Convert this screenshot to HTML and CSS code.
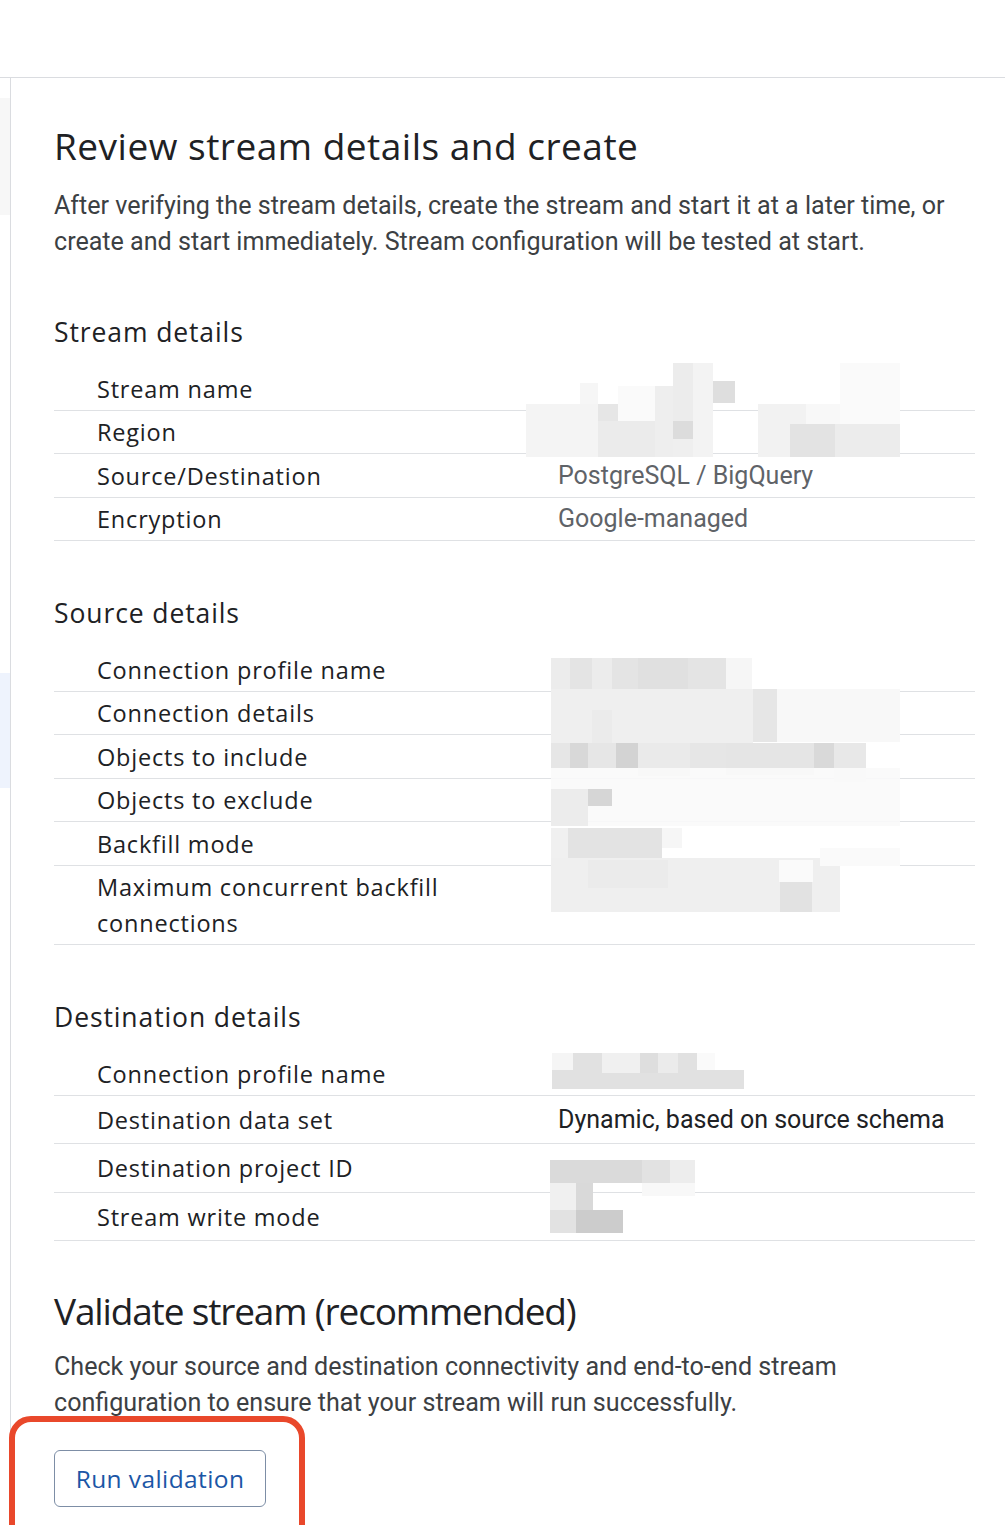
FILE: index.html
```html
<!DOCTYPE html>
<html lang="en">
<head>
<meta charset="utf-8">
<title>Review stream details and create</title>
<link rel="stylesheet" href="styles.css">
</head>
<body>
<div class="topbar"></div>
<div class="layout">
  <aside class="rail">
    <div class="rail-block rail-gray"></div>
    <div class="rail-block rail-blue"></div>
  </aside>
  <main class="main">
    <h1 class="title">Review stream details and create</h1>
    <p class="para">After verifying the stream details, create the stream and start it at a later time, or create and start immediately. Stream configuration will be tested at start.</p>

    <h2 class="section-title">Stream details</h2>
    <div class="table">
      <div class="row"><div class="label">Stream name</div><div class="value"></div></div>
      <div class="row"><div class="label">Region</div><div class="value"></div></div>
      <div class="row"><div class="label">Source/Destination</div><div class="value muted">PostgreSQL / BigQuery</div></div>
      <div class="row"><div class="label">Encryption</div><div class="value muted">Google-managed</div></div>
      <svg class="redact redact-stream" width="380" height="100" viewBox="526 360 380 100" aria-hidden="true">
        <rect x="526" y="403" width="72" height="53" fill="#f4f4f4"/>
        <rect x="580" y="382" width="18" height="21" fill="#f6f6f6"/>
        <rect x="598" y="403" width="20" height="53" fill="#ebebeb"/>
        <rect x="598" y="403" width="20" height="17" fill="#e6e6e6"/>
        <rect x="618" y="420" width="37" height="36" fill="#ebebeb"/>
        <rect x="618" y="385" width="37" height="35" fill="#fafafa"/>
        <rect x="655" y="385" width="18" height="71" fill="#eeeeee"/>
        <rect x="673" y="362" width="20" height="58" fill="#ececec"/>
        <rect x="673" y="420" width="20" height="18" fill="#dcdcdc"/>
        <rect x="673" y="438" width="20" height="18" fill="#efefef"/>
        <rect x="693" y="362" width="20" height="94" fill="#f3f3f3"/>
        <rect x="713" y="380" width="22" height="22" fill="#dedede"/>
        <rect x="758" y="403" width="48" height="53" fill="#f2f2f2"/>
        <rect x="790" y="423" width="45" height="33" fill="#e3e3e3"/>
        <rect x="835" y="423" width="65" height="33" fill="#ececec"/>
        <rect x="840" y="362" width="60" height="61" fill="#fafafa"/>
        <rect x="806" y="403" width="34" height="20" fill="#f8f8f8"/>
      </svg>
    </div>

    <h2 class="section-title">Source details</h2>
    <div class="table">
      <div class="row"><div class="label">Connection profile name</div><div class="value"></div></div>
      <div class="row"><div class="label">Connection details</div><div class="value"></div></div>
      <div class="row"><div class="label">Objects to include</div><div class="value"></div></div>
      <div class="row"><div class="label">Objects to exclude</div><div class="value"></div></div>
      <div class="row"><div class="label">Backfill mode</div><div class="value"></div></div>
      <div class="row"><div class="label">Maximum concurrent backfill connections</div><div class="value"></div></div>
      <svg class="redact redact-source" width="355" height="260" viewBox="550 656 355 260" aria-hidden="true">
        <rect x="551" y="658" width="175" height="31" fill="#e4e4e4"/>
        <rect x="551" y="658" width="19" height="31" fill="#ececec"/>
        <rect x="592" y="658" width="20" height="31" fill="#ececec"/>
        <rect x="638" y="658" width="50" height="31" fill="#e0e0e0"/>
        <rect x="726" y="658" width="26" height="31" fill="#f6f6f6"/>
        <rect x="551" y="689" width="202" height="54" fill="#efefef"/>
        <rect x="592" y="710" width="20" height="33" fill="#ebebeb"/>
        <rect x="753" y="689" width="24" height="53" fill="#e6e6e6"/>
        <rect x="777" y="689" width="123" height="53" fill="#f8f8f8"/>
        <rect x="551" y="743" width="315" height="25" fill="#e6e6e6"/>
        <rect x="570" y="743" width="18" height="25" fill="#d8d8d8"/>
        <rect x="616" y="743" width="22" height="25" fill="#d3d3d3"/>
        <rect x="638" y="743" width="52" height="33" fill="#eaeaea"/>
        <rect x="726" y="743" width="88" height="32" fill="#e5e5e5"/>
        <rect x="814" y="743" width="20" height="25" fill="#d9d9d9"/>
        <rect x="834" y="743" width="32" height="25" fill="#e8e8e8"/>
        <rect x="834" y="768" width="32" height="14" fill="#f2f2f2"/>
        <rect x="551" y="768" width="349" height="58" fill="#f9f9f9" opacity="0.9"/>
        <rect x="551" y="789" width="37" height="37" fill="#ececec"/>
        <rect x="588" y="789" width="24" height="17" fill="#d6d6d6"/>
        <rect x="568" y="828" width="94" height="30" fill="#e3e3e3"/>
        <rect x="551" y="828" width="17" height="30" fill="#f0f0f0"/>
        <rect x="662" y="828" width="20" height="20" fill="#f6f6f6"/>
        <rect x="551" y="858" width="289" height="54" fill="#efefef"/>
        <rect x="588" y="860" width="80" height="28" fill="#ebebeb"/>
        <rect x="780" y="882" width="32" height="30" fill="#e2e2e2"/>
        <rect x="779" y="860" width="34" height="22" fill="#fafafa"/>
        <rect x="820" y="848" width="80" height="18" fill="#fafafa"/>
      </svg>
    </div>

    <h2 class="section-title section-dest">Destination details</h2>
    <div class="table table-dest">
      <div class="row"><div class="label">Connection profile name</div><div class="value"></div></div>
      <div class="row"><div class="label">Destination data set</div><div class="value">Dynamic, based on source schema</div></div>
      <div class="row"><div class="label">Destination project ID</div><div class="value"></div></div>
      <div class="row"><div class="label">Stream write mode</div><div class="value"></div></div>
      <svg class="redact redact-dest" width="200" height="185" viewBox="548 1050 200 185" aria-hidden="true">
        <rect x="552" y="1053" width="192" height="36" fill="#e1e1e1"/>
        <rect x="552" y="1053" width="21" height="17" fill="#f5f5f5"/>
        <rect x="602" y="1053" width="38" height="20" fill="#f0f0f0"/>
        <rect x="640" y="1053" width="18" height="20" fill="#dedede"/>
        <rect x="658" y="1053" width="20" height="20" fill="#ebebeb"/>
        <rect x="697" y="1053" width="18" height="17" fill="#fafafa"/>
        <rect x="715" y="1053" width="29" height="17" fill="#ffffff"/>
        <rect x="550" y="1160" width="145" height="23" fill="#dadada"/>
        <rect x="642" y="1160" width="28" height="23" fill="#e2e2e2"/>
        <rect x="670" y="1160" width="25" height="23" fill="#ededed"/>
        <rect x="550" y="1183" width="26" height="27" fill="#f0f0f0"/>
        <rect x="576" y="1183" width="17" height="27" fill="#d9d9d9"/>
        <rect x="642" y="1183" width="53" height="13" fill="#f8f8f8"/>
        <rect x="550" y="1210" width="26" height="23" fill="#e2e2e2"/>
        <rect x="576" y="1210" width="47" height="23" fill="#cccccc"/>
      </svg>
    </div>

    <h1 class="title title-validate">Validate stream (recommended)</h1>
    <p class="para para-validate">Check your source and destination connectivity and end-to-end stream configuration to ensure that your stream will run successfully.</p>
    <div class="action">
      <button class="btn-outline" type="button">Run validation</button>
      <div class="highlight" aria-hidden="true"></div>
    </div>
  </main>
</div>
</body>
</html>
```

FILE: styles.css
```css
* { box-sizing: border-box; }
html, body { margin: 0; padding: 0; background: #ffffff; }
body {
  font-family: Roboto, "Liberation Sans", sans-serif;
  color: #202124;
  width: 1005px;
  height: 1525px;
  overflow: hidden;
}
.topbar {
  height: 78px;
  border-bottom: 1px solid #dadce0;
}
.layout {
  display: flex;
  align-items: stretch;
  min-height: 1447px;
}
.rail {
  width: 11px;
  flex: 0 0 11px;
  border-right: 1px solid #dadce0;
  padding-top: 20px;
}
.rail-block { width: 10px; height: 117px; }
.rail-gray { background: #f7f7f7; }
.rail-blue { background: #eef3fd; margin-top: 458px; height: 115px; }
.main {
  flex: 1;
  padding: 46px 30px 0 43px;
}
.title {
  margin: 0;
  font-family: "Open Sans", sans-serif;
  font-weight: 400;
  font-size: 37px;
  line-height: 44px;
  letter-spacing: 0.5px;
  color: #202124;
}
.para {
  margin: 20px 0 0;
  max-width: 905px;
  font-family: Roboto, sans-serif;
  font-size: 25.1px;
  line-height: 36px;
  color: #3c4043;
}
.section-title {
  margin: 54px 0 0;
  font-family: "Open Sans", sans-serif;
  font-weight: 500;
  font-size: 26.5px;
  line-height: 36px;
  letter-spacing: 0.9px;
  color: #202124;
}
.table + .section-title { margin-top: 54px; }
.table + .section-dest { margin-top: 54px; }
.table {
  position: relative;
  margin-top: 17px;
}
.row {
  display: grid;
  grid-template-columns: 504px 1fr;
  border-bottom: 1.5px solid #dfe1e4;
  padding: 3.5px 0 3px;
}
.label {
  padding-left: 43px;
  padding-right: 20px;
  font-family: "Open Sans", sans-serif;
  font-weight: 500;
  font-size: 23.5px;
  line-height: 36px;
  letter-spacing: 0.8px;
  color: #202124;
}
.value {
  font-family: Roboto, sans-serif;
  font-size: 25px;
  line-height: 36px;
  color: #202124;
}
.value.muted { color: #5f6368; }
.table-dest .row { padding: 6px 0 5.5px; }
.table-dest .row:first-child { padding: 3.5px 0 3px; }
.redact {
  position: absolute;
  display: block;
}
.redact-stream { left: 472px; top: -6px; }
.redact-source { left: 496px; top: 8px; }
.redact-dest { left: 494px; top: -2px; }
.title-validate { margin-top: 48px; letter-spacing: -1.15px; }
.para-validate { margin-top: 16px; }
.action {
  position: relative;
  margin-top: 29px;
}
.btn-outline {
  width: 212px;
  height: 57px;
  border: 1.5px solid #7d8ea6;
  border-radius: 6px;
  background: #ffffff;
  font-family: "Open Sans", sans-serif;
  font-weight: 500;
  font-size: 24.5px;
  letter-spacing: 0.4px;
  color: #1b56a6;
  padding: 0;
}
.highlight {
  position: absolute;
  left: -45px;
  top: -34px;
  width: 296px;
  height: 150px;
  border: 6px solid #e9482b;
  border-radius: 22px;
}
```
